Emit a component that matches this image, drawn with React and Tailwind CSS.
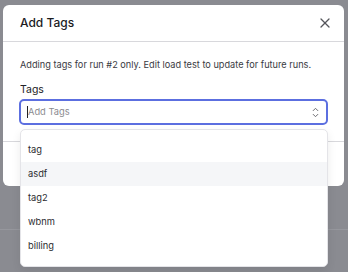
import React from "react";

function Chevrons() {
  return (
    <svg width="7" height="11" viewBox="0 0 7 11" fill="none" stroke="#6b6b70" strokeWidth="1" strokeLinecap="round" strokeLinejoin="round">
      <path d="M1.2 3.6 L3.5 1.3 L5.8 3.6" />
      <path d="M1.2 7.4 L3.5 9.7 L5.8 7.4" />
    </svg>
  );
}

function CloseIcon() {
  return (
    <svg width="10" height="10" viewBox="0 0 10 10" fill="none" stroke="#55565b" strokeWidth="1.3" strokeLinecap="round">
      <path d="M1 1 L9 9" />
      <path d="M9 1 L1 9" />
    </svg>
  );
}

export default function App() {
  const items = ["tag", "asdf", "tag2", "wbnm", "billing"];
  return (
    <div
      className="relative w-[348px] h-[272px] overflow-hidden bg-[#8a8b91]"
      style={{ fontFamily: "Inter, 'Noto Sans', sans-serif" }}
    >
      <div className="h-[230px] border-b border-[#96979d]" />
      <div className="absolute left-[3px] top-[5px] w-[341px] rounded-[6px] bg-white">
        <div className="flex h-[37px] items-center justify-between border-b border-[#d8d8dc] pl-[17px] pr-[14px]">
          <span className="text-[12px] font-medium text-[#1c1c1f]">Add Tags</span>
          <CloseIcon />
        </div>
        <div className="flex flex-col px-4 pt-[16px] pb-[16px]">
          <p className="whitespace-nowrap text-[9.2px] leading-[14px] text-[#3a3a3f] pl-[1px]">
            Adding tags for run #2 only. Edit load test to update for future runs.
          </p>
          <label className="mt-[11px] text-[10.5px] leading-[14px] text-[#222226] pl-[1px]">Tags</label>
          <div className="relative mt-[2px]">
            <div className="flex h-[26px] items-center justify-between rounded-[5px] border-2 border-[#5c6fe0] pl-[6px] pr-[7px]">
              <div className="flex items-center">
                <span className="h-[12px] w-px bg-[#222]" />
                <span className="text-[9.3px] text-[#8b8b90]">Add Tags</span>
              </div>
              <Chevrons />
            </div>
            <div className="absolute left-[1px] top-[30px] z-10 w-[308px] rounded-[5px] border border-[#e4e4e8] bg-white py-[8px] shadow-[0_4px_10px_rgba(0,0,0,0.08)]">
              {items.map((t) => (
                <div
                  key={t}
                  className={`flex h-[24px] items-center px-[7px] text-[9.3px] text-[#2c2c30] ${t === "asdf" ? "bg-[#f5f6f8]" : ""}`}
                >
                  {t}
                </div>
              ))}
            </div>
          </div>
        </div>
        <div className="flex h-[45px] items-center justify-end border-t border-[#d8d8dc] px-4">
          <div className="h-[24px] w-[60px] rounded-[5px] border border-[#5c6fe0] bg-[#eef0fc]" />
        </div>
      </div>
    </div>
  );
}
